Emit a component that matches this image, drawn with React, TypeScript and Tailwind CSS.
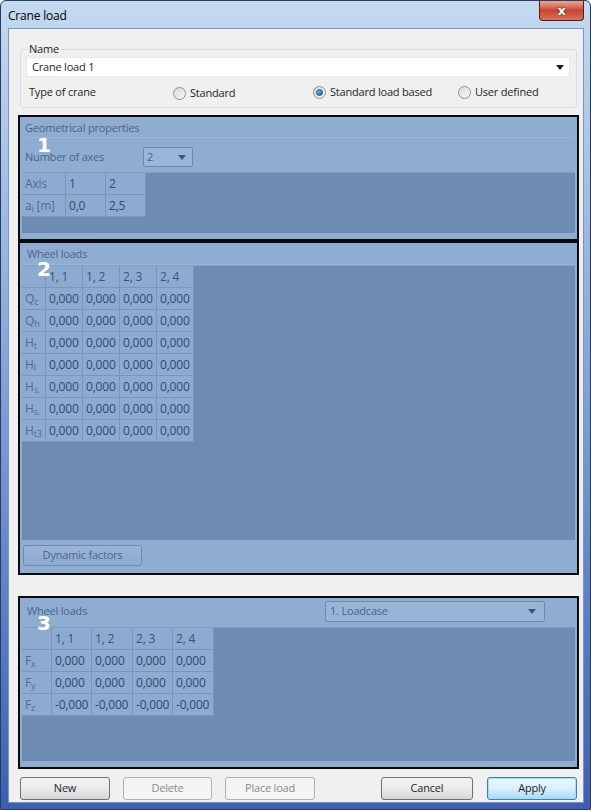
import React from "react";

const font = { fontFamily: '"Open Sans","Noto Sans",Arial,sans-serif', letterSpacing: "-0.2px" };

function Radio({ checked, label }: { checked?: boolean; label: string }) {
  return (
    <div className="flex items-center gap-[4px]">
      <div className="w-[13px] h-[13px] rounded-full border border-[#8e8f8f] bg-gradient-to-br from-[#d9d9d9] to-[#f8f8f8] flex items-center justify-center">
        {checked && (
          <div className="w-[7px] h-[7px] rounded-full bg-gradient-to-br from-[#7fc3f0] to-[#1b5fa0] border border-[#1c4f80]" />
        )}
      </div>
      <span>{label}</span>
    </div>
  );
}

function Caret({ color = "#1a1a1a" }: { color?: string }) {
  return (
    <svg width="8" height="5" viewBox="0 0 8 5">
      <path d="M0 0 H8 L4 5 Z" fill={color} />
    </svg>
  );
}

function Cell({
  children,
  w,
  label,
}: {
  children?: React.ReactNode;
  w: string;
  label?: boolean;
}) {
  return (
    <div
      className={`${w} h-[22px] flex items-center pl-[3px] border-r border-b border-[#7896bd] bg-[#8dabd0] text-[12px] ${
        label ? "text-[#4d6c95]" : "text-[#2f4a70]"
      }`}
    >
      {children}
    </div>
  );
}

function Sub({ base, sub }: { base: string; sub: string }) {
  return (
    <span>
      {base}
      <span className="text-[9px] relative top-[2px]">{sub}</span>
    </span>
  );
}

function BigNum({ n, cls }: { n: string; cls: string }) {
  return (
    <div
      className={`absolute ${cls} text-white font-bold text-[20px] leading-none`}
      style={{ fontFamily: '"DejaVu Sans",sans-serif' }}
    >
      {n}
    </div>
  );
}

export default function App() {
  const wheelRows: [string, string][] = [
    ["Q", "c"],
    ["Q", "h"],
    ["H", "t"],
    ["H", "l"],
    ["H", "s."],
    ["H", "s."],
    ["H", "t3"],
  ];
  const cols = ["1, 1", "1, 2", "2, 3", "2, 4"];
  return (
    <div
      className="w-[591px] h-[810px] relative overflow-hidden rounded-t-[6px] border border-[#2a3b5e] bg-gradient-to-b from-[#c4daf1] via-[#7d9fd8] to-[#3d5fb2] text-[11px]"
      style={font}
    >
      {/* title bar */}
      <div className="h-[27px] flex items-start justify-between pl-[7px]">
        <div className="pt-[6px] text-[12px] text-black">Crane load</div>
        <div className="w-[45px] h-[20px] mr-[6px] rounded-b-[4px] border border-[#5e1b10] border-t-0 bg-gradient-to-b from-[#e9a99a] via-[#c7452f] to-[#d5735c] flex items-center justify-center text-white font-bold text-[13px] leading-none">
          <span style={{ fontFamily: '"DejaVu Sans",sans-serif', textShadow: "0 0 2px #3b0a00" }}>x</span>
        </div>
      </div>

      {/* client area */}
      <div className="ml-[7px] mr-[6px] h-[775px] bg-[#f0f0f0] border border-[#7d93b8] flex flex-col pl-[9px] pr-[4px] text-[#1e1e1e]">
        {/* Name group */}
        <fieldset className="mt-[12px] mx-[2px] border border-[#d5dfe5] rounded-[3px] pl-[5px] pr-[6px] pb-[5px]">
          <legend className="ml-[2px] px-[1px] leading-[16px]">Name</legend>
          <div className="h-[20px] bg-white border border-[#e3e9ef] flex items-center justify-between pl-[5px] pr-[5px]">
            <span>Crane load 1</span>
            <Caret />
          </div>
          <div className="h-[20px] mt-[5px] flex items-center pl-[3px]">
            <span className="w-[144px]">Type of crane</span>
            <div className="w-[140px] pt-[2px]">
              <Radio label="Standard" />
            </div>
            <div className="w-[145px]">
              <Radio checked label="Standard load based" />
            </div>
            <Radio label="User defined" />
          </div>
        </fieldset>

        {/* Box 1 */}
        <div className="relative mt-[7px] border-2 border-[#0a0a0a] h-[126px] bg-[#8fadd1] p-[2px] flex flex-col">
          <div className="h-[53px] flex flex-col pl-[3px] text-[#4a6489]">
            <div className="h-[18px] flex items-center mt-[1px] border-b border-[#9bb6d8]">Geometrical properties</div>
            <div className="flex items-center mt-[9px]">
              <span className="w-[118px]">Number of axes</span>
              <div className="w-[50px] h-[20px] rounded-[2px] border border-[#6d8ab2] bg-[#9ab5d7] flex items-center justify-between pl-[3px] pr-[6px]">
                <span>2</span>
                <Caret color="#3d5678" />
              </div>
            </div>
          </div>
          <div className="flex-1 bg-[#6e8cb3] border-t border-[#7f9cc2]">
            <div className="flex">
              <Cell w="w-[44px]" label>Axis</Cell>
              <Cell w="w-[40px]">1</Cell>
              <Cell w="w-[40px]">2</Cell>
            </div>
            <div className="flex">
              <Cell w="w-[44px]" label>
                <Sub base="a" sub="i" />
                <span>&nbsp;[m]</span>
              </Cell>
              <Cell w="w-[40px]">0,0</Cell>
              <Cell w="w-[40px]">2,5</Cell>
            </div>
          </div>
          <div className="h-[4px]" />
          <BigNum n="1" cls="left-[17px] top-[18px]" />
        </div>

        {/* Box 2 */}
        <div className="relative border-2 border-[#0a0a0a] h-[334px] bg-[#8fadd1] p-[2px] flex flex-col">
          <div className="h-[20px] flex items-center pl-[5px] text-[#4a6489] border-b border-[#9bb6d8]">Wheel loads</div>
          <div className="flex-1 bg-[#6e8cb3] border-t border-[#7f9cc2]">
            <div className="flex">
              <Cell w="w-[24px]" label />
              {cols.map((c) => (
                <Cell key={c} w="w-[37px]">
                  <span className="text-[#3a5378]">{c}</span>
                </Cell>
              ))}
            </div>
            {wheelRows.map(([b, s], i) => (
              <div className="flex" key={i}>
                <Cell w="w-[24px]" label>
                  <Sub base={b} sub={s} />
                </Cell>
                {cols.map((c) => (
                  <Cell key={c} w="w-[37px]">0,000</Cell>
                ))}
              </div>
            ))}
          </div>
          <div className="h-[31px] flex items-center pl-[1px]">
            <div className="w-[119px] h-[21px] rounded-[3px] border border-[#6e8bb3] bg-gradient-to-b from-[#9ab5d8] to-[#8dabd0] flex items-center justify-center text-[#4a6790]">
              Dynamic factors
            </div>
          </div>
          <BigNum n="2" cls="left-[17px] top-[16px]" />
        </div>

        {/* Box 3 */}
        <div className="relative mt-[21px] border-2 border-[#0a0a0a] h-[173px] bg-[#8fadd1] p-[2px] flex flex-col">
          <div className="h-[27px] flex items-start justify-between pl-[5px] pr-[30px] text-[#4a6489]">
            <span className="pt-[3px]">Wheel loads</span>
            <div className="w-[220px] h-[21px] mt-[1px] rounded-[2px] border border-[#6d8ab2] bg-[#98b4d7] flex items-center justify-between pl-[4px] pr-[8px]">
              <span>1. Loadcase</span>
              <Caret color="#3d5678" />
            </div>
          </div>
          <div className="flex-1 bg-[#6e8cb3] border-t border-[#7f9cc2]">
            <div className="flex">
              <Cell w="w-[30px]" label />
              {cols.map((c, i) => (
                <Cell key={c} w={i % 2 === 0 ? "w-[40px]" : "w-[41px]"}>
                  <span className="text-[#3a5378]">{c}</span>
                </Cell>
              ))}
            </div>
            {[
              ["F", "x", "0,000"],
              ["F", "y", "0,000"],
              ["F", "z", "-0,000"],
            ].map(([b, s, v], i) => (
              <div className="flex" key={i}>
                <Cell w="w-[30px]" label>
                  <Sub base={b} sub={s} />
                </Cell>
                {cols.map((c, j) => (
                  <Cell key={c} w={j % 2 === 0 ? "w-[40px]" : "w-[41px]"}>
                    {v}
                  </Cell>
                ))}
              </div>
            ))}
          </div>
          <div className="h-[4px]" />
          <BigNum n="3" cls="left-[17px] top-[15px]" />
        </div>

        {/* Buttons */}
        <div className="mt-[8px] flex items-center">
          <div className="ml-[2px] w-[90px] h-[23px] rounded-[3px] border border-[#707070] bg-gradient-to-b from-[#f2f2f2] via-[#ebebeb] to-[#d6d6d6] flex items-center justify-center">New</div>
          <div className="ml-[13px] w-[89px] h-[23px] rounded-[3px] border border-[#adb2b5] bg-[#f4f4f4] flex items-center justify-center text-[#8a8a8a]">Delete</div>
          <div className="ml-[13px] w-[90px] h-[23px] rounded-[3px] border border-[#adb2b5] bg-[#f4f4f4] flex items-center justify-center text-[#8a8a8a]">Place load</div>
          <div className="ml-[66px] w-[92px] h-[23px] rounded-[3px] border border-[#707070] bg-gradient-to-b from-[#f2f2f2] via-[#ebebeb] to-[#d6d6d6] flex items-center justify-center">Cancel</div>
          <div className="ml-[14px] w-[90px] h-[23px] rounded-[3px] border border-[#3c7fb1] bg-gradient-to-b from-[#eaf6fd] via-[#d9f0fc] to-[#a7d9f5] shadow-[inset_0_0_0_1px_#9fe0fb] flex items-center justify-center">Apply</div>
        </div>
      </div>
    </div>
  );
}
